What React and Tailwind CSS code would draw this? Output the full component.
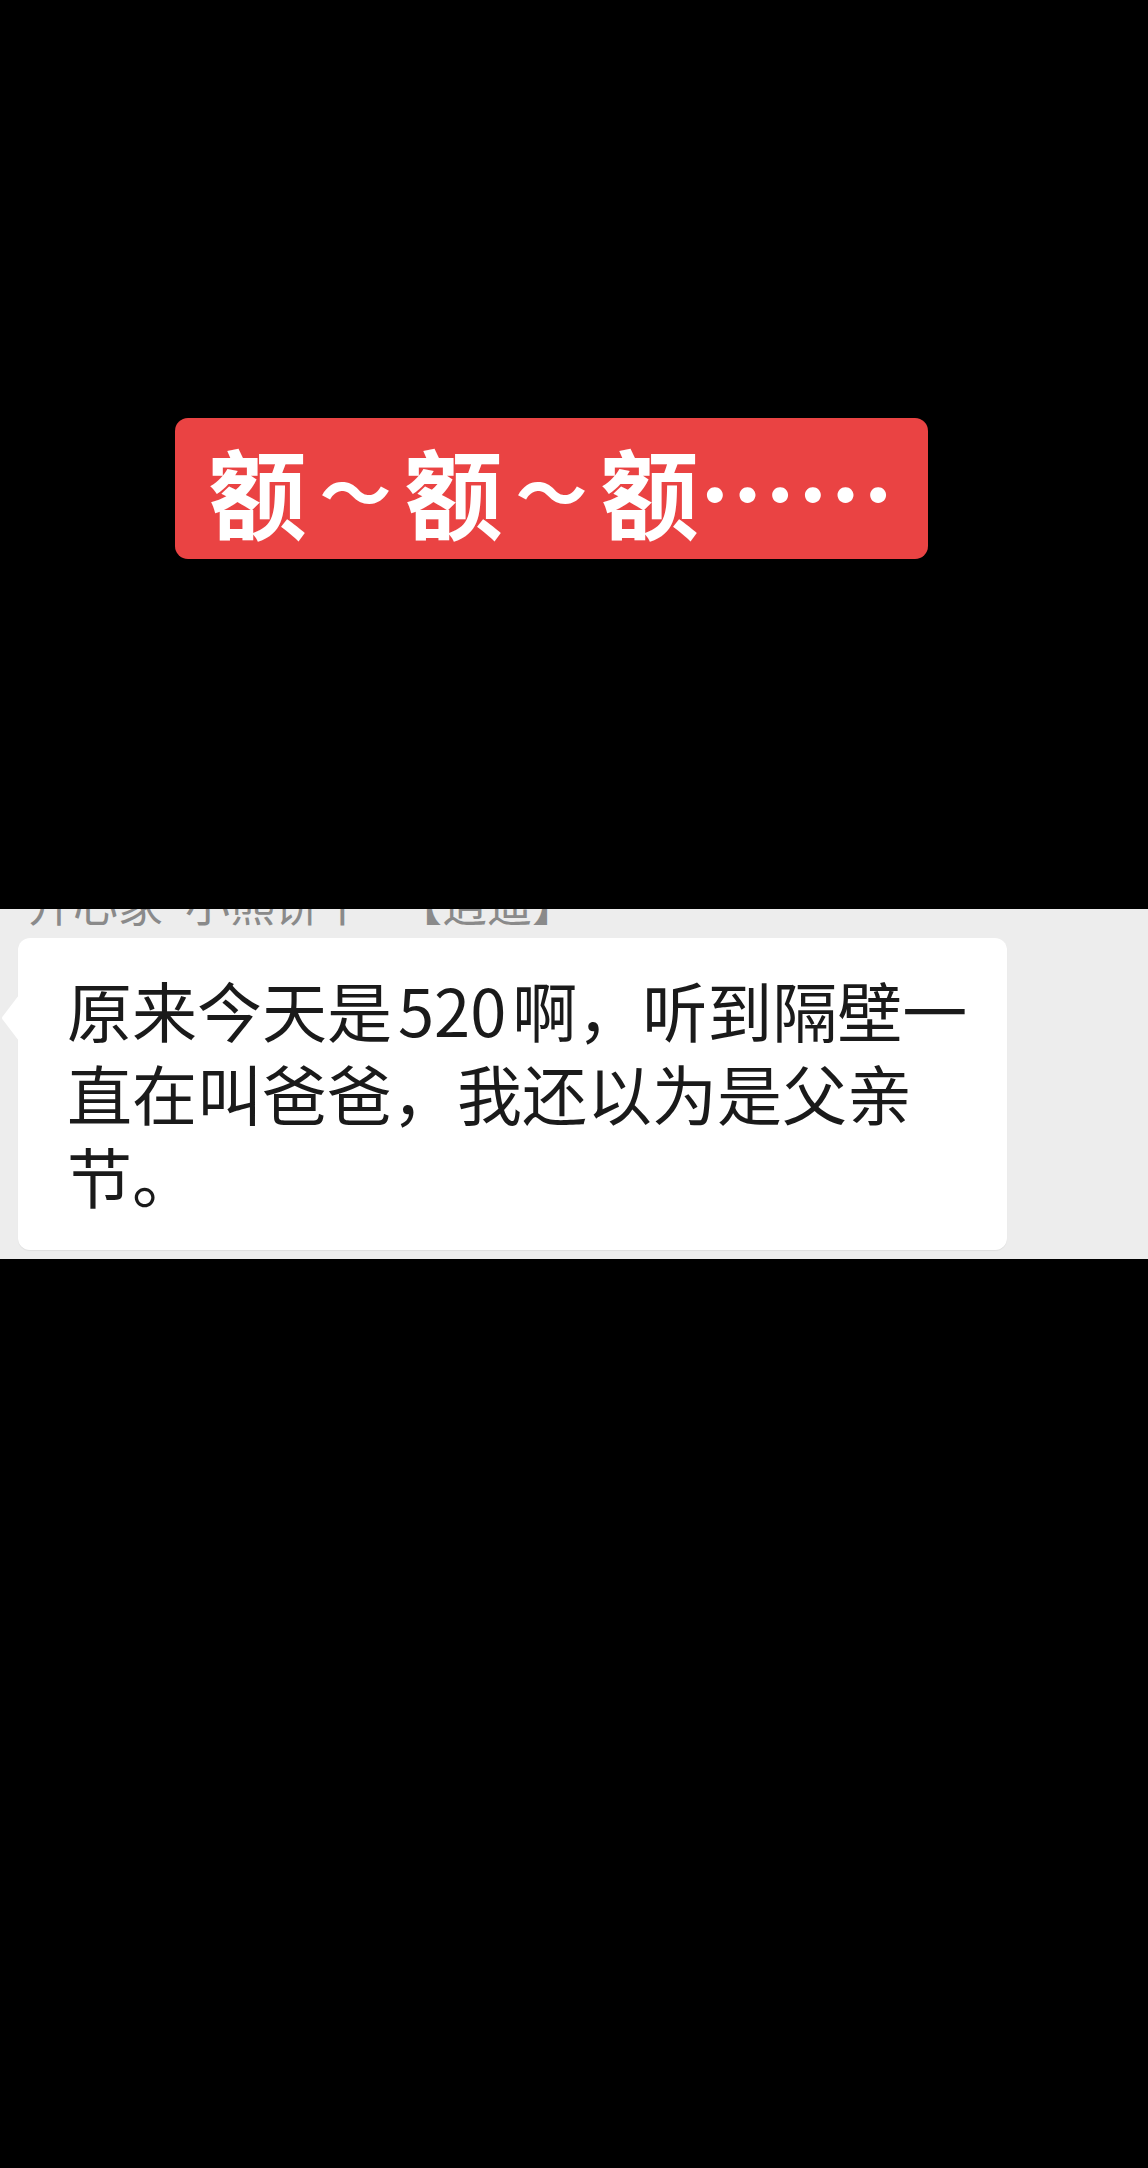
export default function App() {
  const cjk = { fontFamily: '"Noto Sans CJK SC", "Noto Sans", sans-serif' };
  return (
    <div className="w-[1148px] h-[2168px] bg-black flex flex-col" style={cjk}>
      <div className="pt-[418px] pl-[175px]">
        <div className="w-[753px] h-[141px] rounded-[13px] bg-[#ea4343] flex items-center justify-center">
          <div className="flex items-center text-white font-bold leading-none whitespace-nowrap">
            <span className="text-[98px]">额</span>
            <span className="text-[72px] w-[98px] text-center">～</span>
            <span className="text-[98px]">额</span>
            <span className="text-[72px] w-[98px] text-center">～</span>
            <span className="text-[98px]">额……</span>
          </div>
        </div>
      </div>
      <div className="mt-[350px] h-[350px] bg-[#ededed] overflow-hidden flex flex-col">
        <div className="mt-[-29px] pl-[28px] h-[45px] text-[45px] leading-[45px] text-[#8a8a8a] whitespace-nowrap flex">
          <span>开心家</span>
          <span className="ml-[22px]">小熊饼干</span>
          <span className="ml-[32px]">【逍遥】</span>
        </div>
        <div className="mt-[13px] ml-[18px] w-[989px] h-[312px] relative bg-white rounded-[12px] shadow-[0_1px_1px_rgba(0,0,0,0.06)]">
          <svg className="absolute left-[-17px] top-[57px]" width="18" height="46" viewBox="0 0 18 46">
            <path d="M18 0 L2 21 Q0 23 2 25 L18 46 Z" fill="#ffffff" />
          </svg>
          <div className="pl-[49px] pt-[30px] text-[65px] leading-[83px] text-[#1a1a1a] whitespace-nowrap">
            <div>原来今天是<span className="mx-[6px]">520</span>啊，听到隔壁一</div>
            <div>直在叫爸爸，我还以为是父亲</div>
            <div>节。</div>
          </div>
        </div>
      </div>
    </div>
  );
}
